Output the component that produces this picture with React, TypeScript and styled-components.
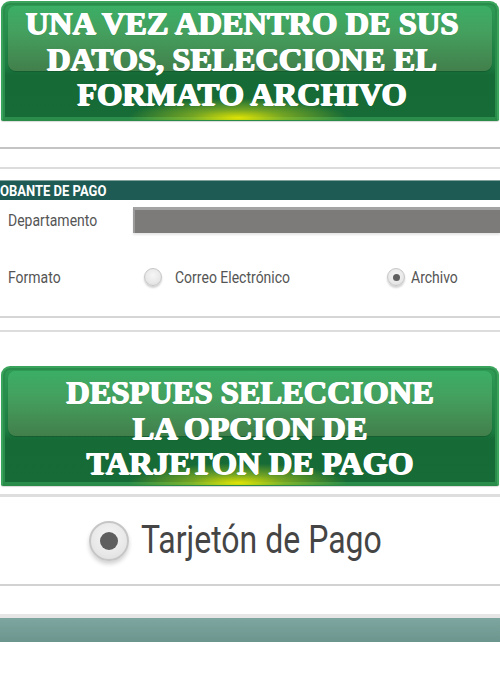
import styled, { createGlobalStyle } from "styled-components"

const GlobalStyle = createGlobalStyle`
  html, body {
    margin: 0;
    padding: 0;
    background: #ffffff;
  }
  body {
    font-family: Roboto, "Liberation Sans", Arial, sans-serif;
  }
`

const Page = styled.div`
  width: 500px;
  min-height: 700px;
  display: flex;
  flex-direction: column;
  background: #fff;
  overflow: hidden;
`

// glossy green instruction banner, 120px tall overall
const Banner = styled.div<{ $top: number; $padTop: number; $shiftLeft?: number }>`
  position: relative;
  margin: ${(p) => p.$top}px 1px 0 1px;
  height: ${(p) => 116 - p.$padTop}px;
  padding-top: ${(p) => p.$padTop}px;
  padding-right: ${(p) => p.$shiftLeft ?? 0}px;
  border-radius: 9px 9px 2px 2px;
  background: linear-gradient(180deg, #2f9c55 0%, #1b7a40 55%, #166a35 62%, #176b37 100%);
  border: 2px solid #3aa35c;
  border-bottom-color: #2a8a48;
  box-shadow: inset 0 0 0 2px #2a8d4c, 0 1px 1px rgba(0, 0, 0, 0.15);
  box-sizing: content-box;
  text-align: center;

  &::before {
    content: "";
    position: absolute;
    left: 5px;
    right: 5px;
    top: 3px;
    height: 56%;
    border-radius: 7px 7px 8px 8px;
    background: linear-gradient(180deg, #3bae65 0%, #44a05e 40%, #427f4b 100%);
    box-shadow: 0 1px 1px rgba(0, 0, 0, 0.18);
  }

  &::after {
    content: "";
    position: absolute;
    left: 25%;
    right: 30%;
    bottom: -1px;
    height: 22px;
    background: radial-gradient(ellipse at 50% 90%, rgba(232, 232, 0, 0.95) 0%, rgba(190, 210, 20, 0.55) 30%, rgba(30, 110, 55, 0) 70%);
  }
`

const BannerText = styled.div`
  position: relative;
  z-index: 1;
  font-family: "Liberation Serif", "Times New Roman", serif;
  font-weight: 700;
  font-size: 32.5px;
  line-height: 35.5px;
  color: #ffffff;
  text-shadow: 0.8px 0 0 #fff, -0.8px 0 0 #fff, 0 0.6px 0 #fff, 0 1px 1px rgba(0, 40, 10, 0.35);
  white-space: nowrap;
`

const Rule = styled.div<{ $top: number; $h?: number; $color?: string }>`
  margin-top: ${(p) => p.$top}px;
  height: ${(p) => p.$h ?? 2}px;
  background: ${(p) => p.$color ?? "#cfcfcf"};
`

const SectionBar = styled.div`
  margin-top: 11px;
  height: 19px;
  background: #1e5b54;
  border-top: 1px solid #7fa29d;
  display: flex;
  align-items: center;
  color: #ffffff;
  font-weight: 700;
  font-size: 13px;
`

const Stretch = styled.span<{ $k?: number }>`
  display: inline-block;
  transform: scaleY(${(p) => p.$k ?? 1.15});
`

const FieldRow = styled.div<{ $top: number }>`
  margin-top: ${(p) => p.$top}px;
  height: 40px;
  display: flex;
  align-items: center;
`

const FieldLabel = styled.div`
  width: 125px;
  padding-left: 8px;
  font-size: 14px;
  color: #555555;
`

const GrayInput = styled.div`
  flex: 1;
  height: 26px;
  background: #7c7b79;
  border-top: 3px solid #a3a3a3;
  border-left: 2px solid #9a9a9a;
  box-sizing: border-box;
  box-shadow: 0 2px 2px #e6e6e6;
`

const Option = styled.label<{ $width?: number; $gap: number; $lead: number }>`
  display: flex;
  align-items: center;
  gap: ${(p) => p.$gap}px;
  margin-left: ${(p) => p.$lead}px;
  width: ${(p) => (p.$width ? `${p.$width}px` : "auto")};
  font-size: 14px;
  color: #555555;
`

const Radio = styled.span<{ $checked?: boolean; $size: number; $dot: number }>`
  position: relative;
  width: ${(p) => p.$size}px;
  height: ${(p) => p.$size}px;
  flex: none;
  border-radius: 50%;
  box-sizing: border-box;
  border: ${(p) => Math.max(1, Math.round(p.$size / 18))}px solid #c6c6c6;
  background: radial-gradient(circle at 50% 40%, #f6f6f6 0%, #e8e8e8 60%, #dadada 100%);
  box-shadow: 0 ${(p) => Math.round(p.$size / 12)}px ${(p) => Math.round(p.$size / 10)}px rgba(0, 0, 0, 0.18);

  &::after {
    content: "";
    display: ${(p) => (p.$checked ? "block" : "none")};
    position: absolute;
    left: 50%;
    top: 50%;
    width: ${(p) => p.$dot}px;
    height: ${(p) => p.$dot}px;
    margin: -${(p) => p.$dot / 2}px 0 0 -${(p) => p.$dot / 2}px;
    border-radius: 50%;
    background: #5f5f5f;
  }
`

const BigRow = styled.div`
  height: 87px;
  display: flex;
  align-items: center;
  padding-left: 89px;
  gap: 12px;
`

const BigText = styled.span`
  font-size: 32px;
  color: #454545;
  margin-top: -2px;
`

const FooterBar = styled.div`
  margin-top: 28px;
  height: 24px;
  border-top: 4px solid #e6e6e6;
  background: linear-gradient(180deg, #7ca69f 0%, #6c958e 100%);
`

export default function App() {
  return (
    <Page>
      <GlobalStyle />

      <Banner $top={1} $padTop={3} $shiftLeft={16}>
        <BannerText>UNA VEZ ADENTRO DE SUS</BannerText>
        <BannerText>DATOS, SELECCIONE EL</BannerText>
        <BannerText>FORMATO ARCHIVO</BannerText>
      </Banner>

      <Rule $top={26} $h={2} $color="#c4c4c4" />
      <Rule $top={18} $h={2} $color="#dcdcdc" />

      <SectionBar>
        <Stretch>OBANTE DE PAGO</Stretch>
      </SectionBar>

      <FieldRow $top={0}>
        <FieldLabel>
          <Stretch>Departamento</Stretch>
        </FieldLabel>
        <GrayInput />
      </FieldRow>

      <FieldRow $top={17}>
        <FieldLabel>
          <Stretch>Formato</Stretch>
        </FieldLabel>
        <Option $lead={11} $gap={13} $width={243}>
          <Radio $size={18} $dot={7} />
          <Stretch>Correo Electrónico</Stretch>
        </Option>
        <Option $lead={0} $gap={6}>
          <Radio $size={18} $dot={7} $checked />
          <Stretch>Archivo</Stretch>
        </Option>
      </FieldRow>

      <Rule $top={19} $h={2} $color="#d6d6d6" />
      <Rule $top={12} $h={2} $color="#dddddd" />

      <Banner $top={34} $padTop={7}>
        <BannerText>DESPUES SELECCIONE</BannerText>
        <BannerText>LA OPCION DE</BannerText>
        <BannerText>TARJETON DE PAGO</BannerText>
      </Banner>

      <Rule $top={8} $h={3} $color="#dedede" />

      <BigRow>
        <Radio $size={40} $dot={18} $checked />
        <BigText>
          <Stretch $k={1.22}>Tarjetón de Pago</Stretch>
        </BigText>
      </BigRow>

      <Rule $top={0} $h={2} $color="#d2d2d2" />

      <FooterBar />
    </Page>
  )
}
